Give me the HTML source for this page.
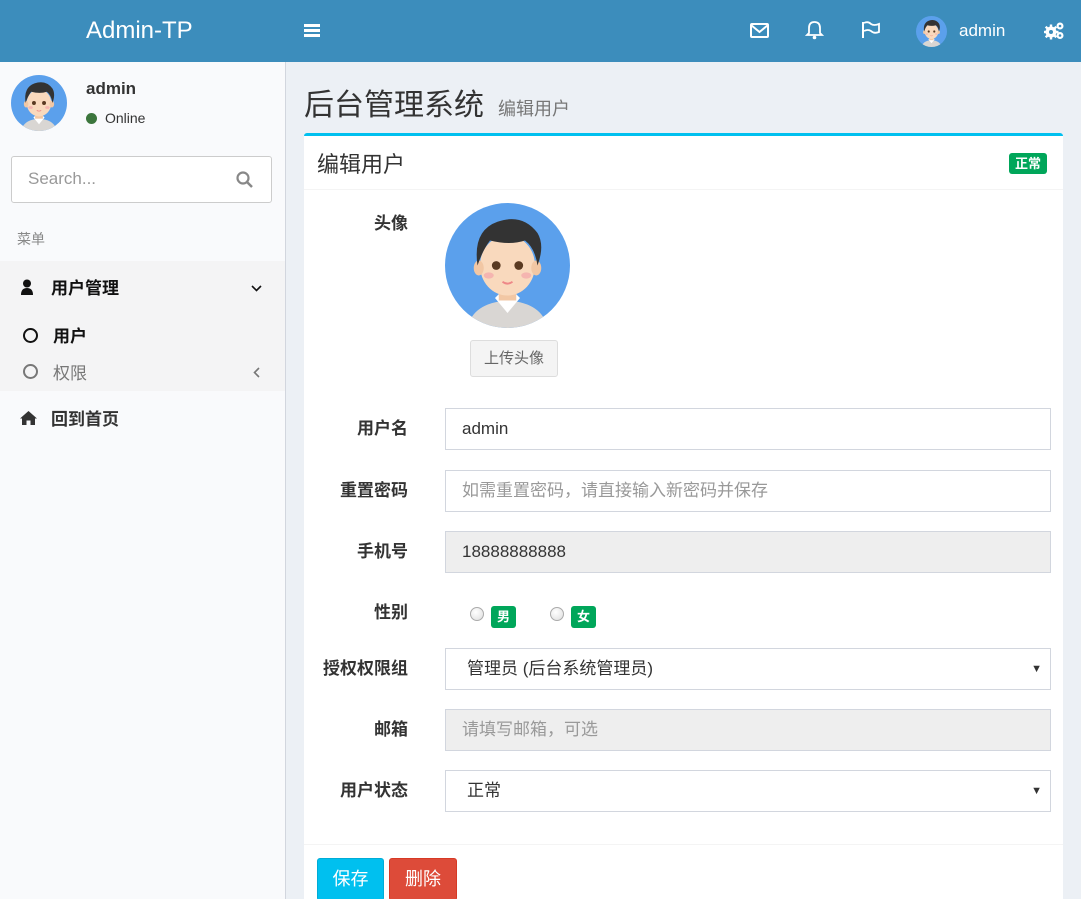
<!DOCTYPE html>
<html><head><meta charset="utf-8"><style>
*{box-sizing:border-box;margin:0;padding:0}
html,body{width:1081px;height:899px;overflow:hidden}
body{font-family:"Liberation Sans","Noto Sans CJK SC",sans-serif;background:#ecf0f5;position:relative;color:#333}
.hdr{position:absolute;left:0;top:0;width:1081px;height:62px;background:#3c8dbc;color:#fff}
.abs{position:absolute}
.side{position:absolute;left:0;top:62px;width:286px;height:837px;background:#f9fafc;border-right:1px solid #d2d6de}
.lbl{position:absolute;width:408px;left:0;text-align:right;font-weight:bold;font-size:17px;color:#333}
.inp{position:absolute;left:445px;width:606px;height:42px;border:1px solid #d2d6de;font-size:17px;padding:0 16px;line-height:40px;background:#fff}
.ph{color:#999}
.dis{background:#eee}
.arrow{position:absolute;right:8px;top:0;font-size:11px;color:#333}
.badge{display:inline-block;background:#00a65a;color:#fff;font-weight:bold;font-size:13px;border-radius:3px;padding:0 6px;height:22px;line-height:22px}
.radio{position:absolute;width:14px;height:14px;border-radius:50%;border:1px solid #aaa;background:radial-gradient(circle at 40% 35%,#fff,#ddd)}
</style></head><body>
<svg width="0" height="0" style="position:absolute"><defs>
<symbol id="av" viewBox="0 0 100 100">
<circle cx="50" cy="50" r="50" fill="#5ba0ec"/>
<clipPath id="c"><circle cx="50" cy="50" r="50"/></clipPath>
<g clip-path="url(#c)">
<path d="M18 100 Q22 80 50 78 Q78 80 82 100Z" fill="#d9d6d3"/>
<path d="M40 76 L50 88 L60 76 L56 72 L44 72Z" fill="#fff"/>
<rect x="43" y="62" width="14" height="16" fill="#f2c7a4"/>
<ellipse cx="50" cy="50" rx="22" ry="24" fill="#f9d9bd"/>
<ellipse cx="27" cy="52" rx="4" ry="6" fill="#f2c7a4"/><ellipse cx="73" cy="52" rx="4" ry="6" fill="#f2c7a4"/>
<path d="M26 50 Q22 22 42 15 Q62 8 74 24 Q80 34 74 50 Q72 36 64 30 Q52 34 36 30 Q30 38 26 50Z" fill="#333"/>
<circle cx="41" cy="50" r="3.5" fill="#5a3a22"/><circle cx="59" cy="50" r="3.5" fill="#5a3a22"/>
<ellipse cx="35" cy="58" rx="4" ry="2.5" fill="#f5b5b0"/><ellipse cx="65" cy="58" rx="4" ry="2.5" fill="#f5b5b0"/>
<path d="M46 63 Q50 66 54 63" stroke="#e88" stroke-width="1.5" fill="none"/>
</g></symbol></defs></svg>

<div class="hdr">
<div class="abs" style="left:86px;top:17px;font-size:24px">Admin-TP</div>
<div class="abs" style="left:304px;top:24px;width:16px">
<div style="height:3px;background:#fff;margin-bottom:2px"></div><div style="height:3px;background:#fff;margin-bottom:2px"></div><div style="height:3px;background:#fff"></div></div>
<svg class="abs" style="left:750px;top:23px" width="19" height="15" viewBox="0 0 19 15"><rect x="1" y="1" width="17" height="13" rx="1" fill="none" stroke="#fff" stroke-width="2"/><path d="M1 2 L9.5 9 L18 2" fill="none" stroke="#fff" stroke-width="2"/></svg>
<svg class="abs" style="left:805px;top:20px" width="19" height="20" viewBox="0 0 19 20"><path d="M9.5 2 Q4 2 4 8 L4 13 L2 15 L17 15 L15 13 L15 8 Q15 2 9.5 2Z" fill="none" stroke="#fff" stroke-width="1.8"/><circle cx="9.5" cy="17.5" r="1.8" fill="#fff"/></svg>
<svg class="abs" style="left:861px;top:21px" width="19" height="18" viewBox="0 0 19 18"><path d="M2 1 L2 17" stroke="#fff" stroke-width="2"/><path d="M3 2 Q7 0 10 3 Q13 5 18 3 L18 11 Q13 13 10 10 Q7 8 3 10" fill="none" stroke="#fff" stroke-width="1.8"/></svg>
<svg class="abs" style="left:916px;top:16px" width="31" height="31"><use href="#av"/></svg>
<div class="abs" style="left:959px;top:21px;font-size:17px">admin</div>
<svg class="abs" style="left:1044px;top:21px" width="21" height="19" viewBox="0 0 21 19">
<g fill="#fff"><circle cx="7" cy="11" r="5.5"/>
<rect x="5.8" y="3.5" width="2.4" height="15"/><rect x="-0.5" y="9.8" width="15" height="2.4"/>
<rect x="5.8" y="3.5" width="2.4" height="15" transform="rotate(45 7 11)"/><rect x="5.8" y="3.5" width="2.4" height="15" transform="rotate(-45 7 11)"/>
<circle cx="16" cy="5" r="3.5"/><circle cx="16" cy="14.5" r="3.5"/></g>
<circle cx="7" cy="11" r="2" fill="#3c8dbc"/><circle cx="16" cy="5" r="1.3" fill="#3c8dbc"/><circle cx="16" cy="14.5" r="1.3" fill="#3c8dbc"/></svg>
</div>

<div class="side">
<svg class="abs" style="left:11px;top:13px" width="56" height="56"><use href="#av"/></svg>
<div class="abs" style="left:86px;top:17px;font-weight:bold;font-size:17px;color:#333">admin</div>
<div class="abs" style="left:86px;top:51px;width:11px;height:11px;border-radius:50%;background:#3c763d"></div>
<div class="abs" style="left:105px;top:48px;font-size:14px;color:#333">Online</div>
<div class="abs" style="left:11px;top:94px;width:261px;height:47px;border:1px solid #ccc;background:#fff;border-radius:3px;font-size:17px;color:#999;padding:12px 16px">Search...</div>
<svg class="abs" style="left:236px;top:109px" width="18" height="18" viewBox="0 0 18 18"><circle cx="7" cy="7" r="5.5" fill="none" stroke="#888" stroke-width="2.2"/><path d="M11 11 L16 16" stroke="#888" stroke-width="2.5"/></svg>
<div class="abs" style="left:17px;top:167px;font-size:14px;color:#888">菜单</div>
<div class="abs" style="left:0;top:199px;width:285px;height:130px;background:#f4f4f5"></div>
<svg class="abs" style="left:20px;top:217px" width="14" height="16" viewBox="0 0 14 16"><circle cx="7" cy="4.5" r="4" fill="#111"/><path d="M1 16 Q1 9 7 9 Q13 9 13 16Z" fill="#111"/></svg>
<div class="abs" style="left:51px;top:212px;font-size:17px;font-weight:bold;color:#111">用户管理</div>
<svg class="abs" style="left:251px;top:223px" width="11" height="7" viewBox="0 0 11 7"><path d="M1 1 L5.5 5.5 L10 1" fill="none" stroke="#111" stroke-width="1.6"/></svg>
<div class="abs" style="left:23px;top:266px;width:15px;height:15px;border:2.5px solid #111;border-radius:50%"></div>
<div class="abs" style="left:53px;top:260px;font-size:17px;font-weight:bold;color:#111">用户</div>
<div class="abs" style="left:23px;top:302px;width:15px;height:15px;border:2.5px solid #777;border-radius:50%"></div>
<div class="abs" style="left:53px;top:297px;font-size:17px;color:#777">权限</div>
<svg class="abs" style="left:253px;top:305px" width="7" height="11" viewBox="0 0 7 11"><path d="M6 1 L1.5 5.5 L6 10" fill="none" stroke="#777" stroke-width="1.6"/></svg>
<svg class="abs" style="left:20px;top:349px" width="17" height="14" viewBox="0 0 17 14"><path d="M8.5 0 L17 7.5 L15 7.5 L15 14 L10.5 14 L10.5 9.5 L6.5 9.5 L6.5 14 L2 14 L2 7.5 L0 7.5Z" fill="#333"/></svg>
<div class="abs" style="left:51px;top:343px;font-size:17px;font-weight:bold;color:#333">回到首页</div>
</div>

<div class="abs" style="left:304px;top:80px;font-size:30px;color:#333;white-space:nowrap">后台管理系统<span style="font-size:18px;color:#777;margin-left:14px">编辑用户</span></div>

<div class="abs" style="left:304px;top:133px;width:759px;height:766px;background:#fff;border-top:3px solid #00c0ef;border-radius:3px 3px 0 0"></div>
<div class="abs" style="left:304px;top:189px;width:759px;height:1px;background:#f4f4f4"></div>
<div class="abs" style="left:317px;top:147px;font-size:22px;color:#333">编辑用户</div>
<span class="badge abs" style="left:1009px;top:153px;height:21px;line-height:21px;white-space:nowrap">正常</span>

<div class="lbl" style="top:209px">头像</div>
<svg class="abs" style="left:445px;top:203px" width="125" height="125"><use href="#av"/></svg>
<div class="abs" style="left:470px;top:340px;width:88px;height:37px;border:1px solid #ddd;background:#f4f4f4;border-radius:3px;font-size:15px;color:#666;text-align:center;line-height:35px">上传头像</div>

<div class="lbl" style="top:414px">用户名</div>
<div class="inp" style="top:408px">admin</div>
<div class="lbl" style="top:476px">重置密码</div>
<div class="inp ph" style="top:470px">如需重置密码，请直接输入新密码并保存</div>
<div class="lbl" style="top:537px">手机号</div>
<div class="inp dis" style="top:531px">18888888888</div>
<div class="lbl" style="top:598px">性别</div>
<div class="radio" style="left:470px;top:607px"></div>
<span class="badge abs" style="left:491px;top:606px">男</span>
<div class="radio" style="left:550px;top:607px"></div>
<span class="badge abs" style="left:571px;top:606px">女</span>
<div class="lbl" style="top:654px">授权权限组</div>
<div class="inp" style="top:648px;padding-left:21px">管理员 (后台系统管理员)<span class="arrow">▼</span></div>
<div class="lbl" style="top:715px">邮箱</div>
<div class="inp dis ph" style="top:709px">请填写邮箱，可选</div>
<div class="lbl" style="top:776px">用户状态</div>
<div class="inp" style="top:770px;padding-left:21px">正常<span class="arrow">▼</span></div>

<div class="abs" style="left:304px;top:844px;width:759px;height:1px;background:#f4f4f4"></div>
<div class="abs" style="left:317px;top:858px;width:67px;height:43px;background:#00c0ef;border:1px solid #00acd6;border-radius:3px;color:#fff;font-size:18px;text-align:center;line-height:40px">保存</div>
<div class="abs" style="left:389px;top:858px;width:68px;height:43px;background:#dd4b39;border:1px solid #d73925;border-radius:3px;color:#fff;font-size:18px;text-align:center;line-height:40px">删除</div>
</body></html>
